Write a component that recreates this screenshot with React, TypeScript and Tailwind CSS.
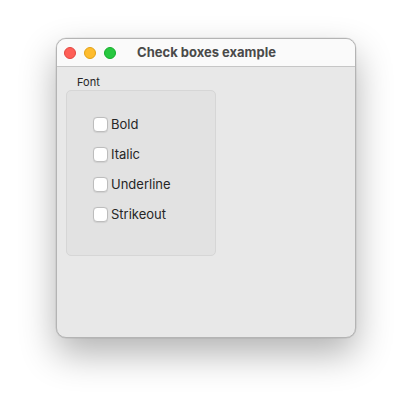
import React from "react";

const items = ["Bold", "Italic", "Underline", "Strikeout"];

export default function App() {
  return (
    <div
      className="w-[412px] h-[412px] bg-white pt-[38px] pl-[56px]"
      style={{ fontFamily: "Inter, 'Noto Sans', sans-serif" }}
    >
      <div className="w-[300px] h-[300px] rounded-[10px] border border-[#b4b4b4] bg-[#e8e8e8] overflow-hidden shadow-[0_16px_36px_rgba(0,0,0,0.3),0_0_0_0.5px_rgba(0,0,0,0.1)] flex flex-col">
        <div className="h-[28px] bg-[#fafafa] border-b border-[#c6c6c6] flex items-center relative shrink-0">
          <div className="flex gap-[8px] pl-[7px]">
            <span className="w-[12px] h-[12px] rounded-full bg-[#fe5f57] border-[0.5px] border-[#e24640]" />
            <span className="w-[12px] h-[12px] rounded-full bg-[#febc2e] border-[0.5px] border-[#e1a116]" />
            <span className="w-[12px] h-[12px] rounded-full bg-[#28c840] border-[0.5px] border-[#14ae2a]" />
          </div>
          <div className="absolute inset-0 flex items-center justify-center text-[13px] font-bold text-[#4a4a4a] pointer-events-none pl-[1px]">
            Check boxes example
          </div>
        </div>
        <div className="pl-[9px] pt-[8px]">
          <div className="text-[11px] leading-[14px] text-[#262626] pl-[11px]">Font</div>
          <div className="mt-[1px] w-[150px] h-[166px] rounded-[5px] border border-[#d6d6d6] bg-[#e2e2e2] pt-[26px] pl-[26px] flex flex-col gap-[15px]">
            {items.map((t) => (
              <label key={t} className="flex items-center h-[15px]">
                <span className="w-[15px] h-[15px] rounded-[4px] bg-white border border-[#bdbdbd] shadow-[0_0.5px_1px_rgba(0,0,0,0.08)] shrink-0" />
                <span className="ml-[3px] text-[13px] text-[#262626] leading-[15px]">{t}</span>
              </label>
            ))}
          </div>
        </div>
      </div>
    </div>
  );
}
